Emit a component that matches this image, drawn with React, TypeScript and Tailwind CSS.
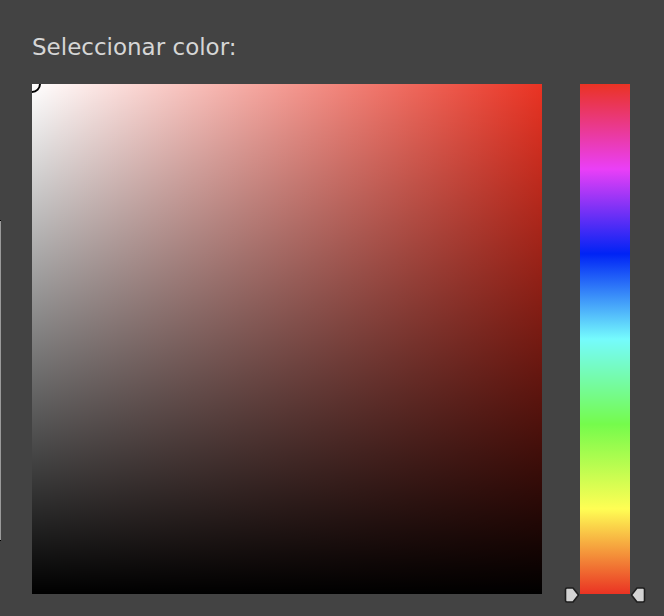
import React from "react";

function Arrow({ dir }: { dir: "right" | "left" }) {
  const d =
    dir === "right"
      ? "M3 2 H9 L14.5 9 L9 16 H3 Q1.5 16 1.5 14.5 V3.5 Q1.5 2 3 2 Z"
      : "M13 2 H7 L1.5 9 L7 16 H13 Q14.5 16 14.5 14.5 V3.5 Q14.5 2 13 2 Z";
  return (
    <svg width="16" height="18" viewBox="0 0 16 18" className="block">
      <path d={d} fill="#d3d3d3" stroke="#1e1e1e" strokeWidth="1.6" strokeLinejoin="round" />
    </svg>
  );
}

export default function App() {
  return (
    <div className="relative w-[664px] h-[616px] bg-[#434343] overflow-hidden">
      <div className="absolute left-0 top-[220px] w-px h-[321px] bg-[#9a9a9a] border-y border-black" />
      <div className="pt-[32px] pl-[32px]">
        <div
          className="text-[23px] leading-[30px] text-[#d6d6d6] h-[52px]"
          style={{ fontFamily: '"DejaVu Sans", sans-serif' }}
        >
          Seleccionar color:
        </div>
        <div className="flex gap-[38px]">
          <div className="relative w-[510px] h-[510px] overflow-hidden bg-[#ea3323]">
            <div className="absolute inset-0 bg-gradient-to-r from-white to-transparent" />
            <div className="absolute inset-0 bg-gradient-to-b from-transparent to-black" />
            <div className="absolute -left-[9px] -top-[9px] w-[18px] h-[18px] rounded-full border-2 border-black" />
          </div>
          <div className="relative w-[50px] h-[510px]">
            <div className="w-full h-full bg-[linear-gradient(to_bottom,#ea3323_0%,#ea3ff7_16.7%,#0023f5_33.3%,#75fbfd_50%,#75fb4c_66.7%,#fffe54_83.3%,#ea3323_100%)]" />
            <div className="absolute -left-[16px] top-[502px]">
              <Arrow dir="right" />
            </div>
            <div className="absolute -right-[16px] top-[502px]">
              <Arrow dir="left" />
            </div>
          </div>
        </div>
      </div>
    </div>
  );
}
